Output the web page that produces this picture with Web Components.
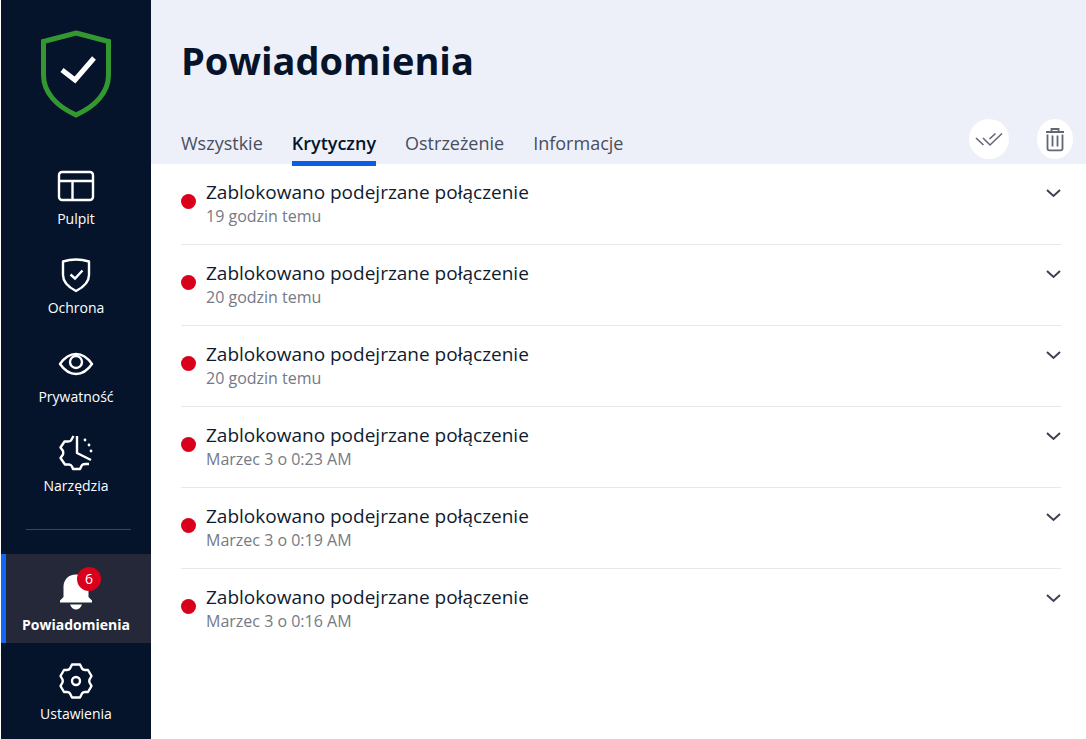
<!DOCTYPE html>
<html lang="pl">
<head>
<meta charset="utf-8">
<meta name="viewport" content="width=device-width, initial-scale=1">
<title>Powiadomienia</title>
<style>
  html, body { margin: 0; min-height: 100vh; background: #fff; }
  body { font-family: "Open Sans", "Noto Sans", sans-serif; color: #06142b; }
</style>
</head>
<body>
<notification-app></notification-app>

<template id="tpl-app">
  <style>
    :host { display: grid; grid-template-columns: 150px minmax(0, 1fr); min-height: 100vh; padding-left: 1px; box-sizing: border-box; }
  </style>
  <side-bar></side-bar>
  <main><notification-page></notification-page></main>
</template>

<template id="tpl-side">
  <style>
    :host { display: block; background: #06142b; color: #fff; }
    .logo { display: block; width: 72px; height: 88px; margin: 0 auto; padding: 30px 0; }
    hr { border: 0; height: 1px; margin: 25px 20px 24px 25px; background: #3b4657; }
  </style>
  <svg class="logo" viewBox="0 0 72 88" fill="none" aria-hidden="true">
    <path d="M36 3 68.500 11.500V45C68.500 62 56 76 36 85 16 76 3.500 62 3.500 45V11.500Z" stroke="#349831" stroke-width="5"/>
    <path d="M22 40 35 50 54 28" stroke="#fff" stroke-width="5"/>
  </svg>
  <nav>
    <nav-item label="Pulpit" href="#pulpit">
      <svg width="40" height="40" viewBox="0 0 40 40" fill="none" stroke="#fff" stroke-width="2.400"><rect x="3" y="6" width="34" height="28" rx="3"/><path d="M3 15H37M16.500 15V34"/></svg>
    </nav-item>
    <nav-item label="Ochrona" href="#ochrona">
      <svg width="40" height="40" viewBox="0 0 40 40" fill="none" stroke="#fff" stroke-width="2.400"><path d="M7 6.500Q20 2.500 33 6.500V20C33 27 28 32 20 36 12 32 7 27 7 20Z" stroke-linejoin="round"/><path d="M14.500 19.500 19 23.500 26.500 15.500"/></svg>
    </nav-item>
    <nav-item label="Prywatność" href="#prywatnosc">
      <svg width="40" height="40" viewBox="0 0 40 40" fill="none" stroke="#fff" stroke-width="2.400"><path d="M4 20Q11 10 20 10T36 20Q29 30 20 30T4 20Z" stroke-linejoin="round"/><circle cx="20" cy="18" r="6"/></svg>
    </nav-item>
    <nav-item label="Narzędzia" href="#narzedzia">
      <svg width="40" height="40" viewBox="0 0 40 40" fill="none" stroke="#fff" stroke-width="2.400" stroke-linejoin="round"><path d="M17.500 3 15 7.500Q14 8.500 12 8.500H8.500L4.500 14.500 7 18Q7.500 19.500 7 21.500L4.500 25 9 31.500H13Q15 31.500 16 33.500L17 36H24L26 32Q27 31 30 31H33"/><path d="M21 3V20L35 27"/><g fill="#fff" stroke="none"><circle cx="29" cy="7" r="1.400"/><circle cx="33" cy="12" r="1.400"/><circle cx="35" cy="18" r="1.400"/></g></svg>
    </nav-item>
    <hr>
    <nav-item label="Powiadomienia" href="#powiadomienia" count="6" active>
      <svg width="40" height="40" viewBox="0 0 40 40" fill="#fff"><path d="M20 2.500C12 2.500 8 8 7.500 14V25L4 28.500V30.500H36V28.500L32.500 25V14C32 8 28 2.500 20 2.500ZM14 32.500H26Q24 37.500 20 37.500T14 32.500Z"/></svg>
    </nav-item>
    <nav-item label="Ustawienia" href="#ustawienia">
      <svg width="40" height="40" viewBox="0 0 40 40" fill="none" stroke="#fff" stroke-width="2.400" stroke-linejoin="round"><path d="M16 3.500H24L26 7.500Q27 9 29 9H32L35.500 15 33.500 18.500Q33 20 33.500 21.500L35.500 25 32 31H29Q27 31 26 32.500L24 36.500H16L14 32.500Q13 31 11 31H8L4.500 25 6.500 21.500Q7 20 6.500 18.500L4.500 15 8 9H11Q13 9 14 7.500Z"/><circle cx="20" cy="20" r="4"/></svg>
    </nav-item>
  </nav>
</template>

<template id="tpl-nav">
  <style>
    :host { display: block; }
    a { display: flex; flex-direction: column; align-items: center; box-sizing: border-box; height: 89px; padding-top: 18px; gap: 3px; color: #fff; text-decoration: none; font-size: 14px; line-height: 20px; }
    .icon { position: relative; display: block; width: 40px; height: 40px; }
    .badge { position: absolute; top: -5px; right: -5px; width: 24px; height: 24px; border-radius: 50%; background: #d9001b; line-height: 24px; text-align: center; }
    .badge[hidden] { display: none; }
    :host([active]) a { background: #252838; box-shadow: inset 5px 0 #1268f5; font-weight: 700; }
    :host([active]) .badge { font-weight: 400; }
  </style>
  <a><span class="icon"><slot></slot><span class="badge" hidden></span></span><span class="label"></span></a>
</template>

<template id="tpl-page">
  <style>
    :host { display: block; }
    header { display: flex; flex-direction: column; justify-content: space-between; box-sizing: border-box; height: 164px; padding: 35px 13px 0 30px; background: #edf0f9; }
    h1 { margin: 0; font-size: 38px; line-height: 50px; font-weight: 700; }
    .bar { display: flex; justify-content: space-between; align-items: flex-start; height: 45px; }
    .tabs { display: flex; gap: 29px; }
    .tabs a { height: 42px; padding-top: 11px; box-sizing: border-box; font-size: 18px; line-height: 26px; color: #474e5e; text-decoration: none; }
    .tabs a[aria-current] { height: 47px; color: #06142b; font-weight: 600; border-bottom: 5px solid #0c5ce5; }
    .actions { display: flex; gap: 28px; }
    button { display: grid; place-items: center; width: 40px; height: 40px; padding: 0; border: 0; border-radius: 50%; background: #fff; }
    button.bin { width: 36px; }
    ul { list-style: none; margin: 0; padding: 0 25px 0 30px; }
  </style>
  <header>
    <h1>Powiadomienia</h1>
    <div class="bar">
      <nav class="tabs">
        <a href="#all">Wszystkie</a><a href="#critical" aria-current="page">Krytyczny</a><a href="#warning">Ostrzeżenie</a><a href="#info">Informacje</a>
      </nav>
      <div class="actions">
        <button aria-label="Oznacz jako przeczytane"><svg width="28" height="24" viewBox="0 0 28 24" fill="none" stroke="#626873" stroke-width="1.600"><path d="M1 11 8.500 18M8 11 15 18 27 6.500M14.500 12 20.500 6.500"/></svg></button>
        <button class="bin" aria-label="Usuń"><svg width="20" height="26" viewBox="0 0 20 26" fill="none" stroke="#626873" stroke-width="1.800"><path d="M1 6H19M6.500 5.500V3H13.500V5.500M2.500 8.500V22.500Q2.500 24.300 4.500 24.300H15.500Q17.500 24.300 17.500 22.500V8.500M7.500 9.500V20.500M12.500 9.500V20.500"/></svg></button>
      </div>
    </div>
  </header>
  <ul>
    <notification-row time="19 godzin temu">Zablokowano podejrzane połączenie</notification-row>
    <notification-row time="20 godzin temu">Zablokowano podejrzane połączenie</notification-row>
    <notification-row time="20 godzin temu">Zablokowano podejrzane połączenie</notification-row>
    <notification-row time="Marzec 3 o 0:23 AM">Zablokowano podejrzane połączenie</notification-row>
    <notification-row time="Marzec 3 o 0:19 AM">Zablokowano podejrzane połączenie</notification-row>
    <notification-row time="Marzec 3 o 0:16 AM">Zablokowano podejrzane połączenie</notification-row>
  </ul>
</template>

<template id="tpl-row">
  <style>
    :host { display: flex; align-items: flex-start; box-sizing: border-box; height: 81px; padding-top: 14px; gap: 10px; border-bottom: 1px solid #e6e8ea; }
    :host(:last-child) { border-bottom-color: transparent; }
    .dot { flex: none; width: 15px; height: 15px; margin-top: 16px; border-radius: 50%; background: #d9001b; }
    .text { flex: 1; min-width: 0; }
    .title { font-size: 19px; line-height: 28px; color: #101b30; }
    .time { font-size: 16px; line-height: 20px; color: #747a85; }
    button { display: grid; place-items: center; width: 16px; height: 30px; padding: 0; border: 0; background: none; }
  </style>
  <span class="dot"></span>
  <div class="text"><div class="title"><slot></slot></div><div class="time"></div></div>
  <button aria-label="Rozwiń"><svg width="16" height="10" viewBox="0 0 16 10" fill="none" stroke="#3c4252" stroke-width="2"><path d="M2 2 8.500 8 15 2"/></svg></button>
</template>

<script>
  class TemplateElement extends HTMLElement {
    constructor() {
      super();
      this.attachShadow({ mode: "open" })
        .append(document.getElementById(this.constructor.template).content.cloneNode(true));
    }
  }
  class NavItem extends TemplateElement {
    static template = "tpl-nav";
    connectedCallback() {
      const link = this.shadowRoot.querySelector("a");
      link.href = this.getAttribute("href");
      this.shadowRoot.querySelector(".label").textContent = this.getAttribute("label");
      if (this.hasAttribute("active")) link.setAttribute("aria-current", "page");
      if (this.hasAttribute("count")) {
        const badge = this.shadowRoot.querySelector(".badge");
        badge.textContent = this.getAttribute("count");
        badge.hidden = false;
      }
    }
  }
  class NotificationRow extends TemplateElement {
    static template = "tpl-row";
    connectedCallback() {
      this.setAttribute("role", "listitem");
      this.shadowRoot.querySelector(".time").textContent = this.getAttribute("time");
    }
  }
  customElements.define("nav-item", NavItem);
  customElements.define("notification-row", NotificationRow);
  customElements.define("side-bar", class extends TemplateElement { static template = "tpl-side"; });
  customElements.define("notification-page", class extends TemplateElement { static template = "tpl-page"; });
  customElements.define("notification-app", class extends TemplateElement { static template = "tpl-app"; });
</script>
</body>
</html>
